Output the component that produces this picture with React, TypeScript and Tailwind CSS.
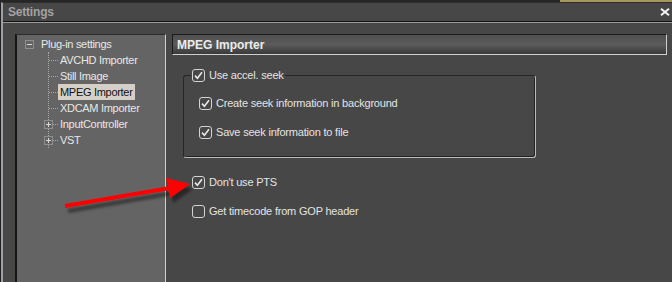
import React from 'react';

type CheckProps = { checked?: boolean; label: string };

function Check({ checked = false, label }: CheckProps) {
  return (
    <div className="flex items-center h-[16px] gap-[4px]">
      <span className="w-[13px] h-[13px] rounded-[3px] border border-[#d4d4d4] flex items-center justify-center">
        {checked && (
          <svg viewBox="0 0 11 11" className="w-[11px] h-[11px]">
            <path d="M2 5.6 L4.4 8.2 L9 2.2" fill="none" stroke="#e8e8e8" strokeWidth="1.6" />
          </svg>
        )}
      </span>
      <span className="whitespace-nowrap">{label}</span>
    </div>
  );
}

function TreeBox({ open }: { open: boolean }) {
  return (
    <span className="w-[9px] h-[9px] border border-[#8e8e8e] bg-[#646464] flex items-center justify-center shrink-0">
      <svg viewBox="0 0 7 7" className="w-[7px] h-[7px]">
        <path d="M1 3.5 H6" stroke="#d8d8d8" strokeWidth="1" />
        {!open && <path d="M3.5 1 V6" stroke="#d8d8d8" strokeWidth="1" />}
      </svg>
    </span>
  );
}

const children = [
  { label: 'AVCHD Importer' },
  { label: 'Still Image' },
  { label: 'MPEG Importer', selected: true },
  { label: 'XDCAM Importer' },
  { label: 'InputController', expandable: true },
  { label: 'VST', expandable: true, last: true },
];

export default function App() {
  return (
    <div className="relative w-[672px] h-[282px] overflow-hidden bg-[#1d2024] font-['Liberation_Sans',Arial,sans-serif] text-[11px] text-[#e4e4e4]">
      {/* desktop strip behind the window */}
      <div className="flex h-[2px]">
        <div className="flex-1 bg-[#262626]" />
        <div className="w-[112px] bg-[#a8965c]" />
      </div>

      <div className="ml-[1px] h-[280px] border-t border-t-[#2c2c2c] border-l-2 border-l-[#a0a0a0] bg-[#474747] flex flex-col">
        {/* title bar */}
        <div className="h-[18px] flex items-center justify-between pl-[5px] pr-[2px]">
          <span className="text-[12px] font-bold text-[#a2a2a2] tracking-[-0.2px]">Settings</span>
          <svg viewBox="0 0 10 8" className="w-[10px] h-[8px]">
            <path d="M1 0.8 L9 7.2 M9 0.8 L1 7.2" stroke="#f4f4f4" strokeWidth="2" />
          </svg>
        </div>
        <div className="h-[1px] bg-[#141414]" />
        <div className="h-[1px] bg-[#9a9a9a]" />

        {/* body */}
        <div className="flex flex-1 min-h-0 pt-[11px] pl-[12px]">
          {/* tree */}
          <div className="w-[151px] bg-[#646464] border-t border-t-[#2b2b2b] border-l-2 border-l-[#151515] border-r border-r-[#cfcfcf] pt-[1px] tracking-[-0.3px] text-[#e8e8e8]">
            <div className="flex items-center h-[16px] pl-[8px] gap-[7px]">
              <TreeBox open />
              <span>Plug-in settings</span>
            </div>
            <div className="ml-[31px] border-l border-dotted border-l-[#a8a8a8]">
              {children.map((c) => (
                <div key={c.label} className={`flex items-center h-[16px] ${c.last ? 'mb-[-8px]' : ''}`}>
                  {c.expandable ? (
                    <>
                      <span className="ml-[-5px]">
                        <TreeBox open={false} />
                      </span>
                      <span className="w-[5px] border-t border-dotted border-t-[#a8a8a8]" />
                    </>
                  ) : (
                    <span className="w-[9px] border-t border-dotted border-t-[#a8a8a8]" />
                  )}
                  <span
                    className={`h-[16px] flex items-center px-[2px] whitespace-nowrap ${
                      c.selected ? 'bg-[#d4d0c8] text-[#111111]' : ''
                    }`}
                  >
                    {c.label}
                  </span>
                </div>
              ))}
            </div>
          </div>

          {/* settings panel */}
          <div className="ml-[6px] w-[495px] flex flex-col tracking-[-0.2px]">
            <div className="h-[21px] flex items-center pl-[4px] border border-t-[#1c1c1c] border-l-[#1c1c1c] border-b-[#d0d0d0] border-r-[#d0d0d0] bg-linear-to-b from-[#4f4f4f] via-[#5b5b5b] to-[#3a3a3a]">
              <span className="text-[12px] font-bold text-[#ececec] tracking-normal">MPEG Importer</span>
            </div>

            <fieldset className="mt-[13px] ml-[11px] w-[353px] h-[90px] rounded-[3px] border border-t-[#262626] border-l-[#262626] border-b-[#bdbdbd] border-r-[#bdbdbd] shadow-[inset_-1px_-1px_0_#222222]">
              <legend className="ml-[7px] px-[1px] h-[14px] flex items-center">
                <Check checked label="Use accel. seek" />
              </legend>
              <div className="pt-[13px] pl-[15px] flex flex-col gap-[13px]">
                <Check checked label="Create seek information in background" />
                <Check checked label="Save seek information to file" />
              </div>
            </fieldset>

            <div className="mt-[16px] ml-[20px] flex flex-col gap-[13px]">
              <Check checked label="Don't use PTS" />
              <Check label="Get timecode from GOP header" />
            </div>
          </div>
        </div>
      </div>

      {/* annotation arrow drawn over the screenshot */}
      <svg className="absolute inset-0 w-[672px] h-[282px] pointer-events-none" viewBox="0 0 672 282">
        <defs>
          <filter id="arrowShadow" x="-20%" y="-60%" width="140%" height="220%">
            <feDropShadow dx="3" dy="5" stdDeviation="1.6" floodColor="#000000" floodOpacity="0.45" />
          </filter>
        </defs>
        <g filter="url(#arrowShadow)">
          <line x1="65" y1="206" x2="170" y2="188" stroke="#ff0000" strokeWidth="4" />
          <polygon points="166,178 190,184 170,198" fill="#ff0000" />
        </g>
      </svg>
    </div>
  );
}
